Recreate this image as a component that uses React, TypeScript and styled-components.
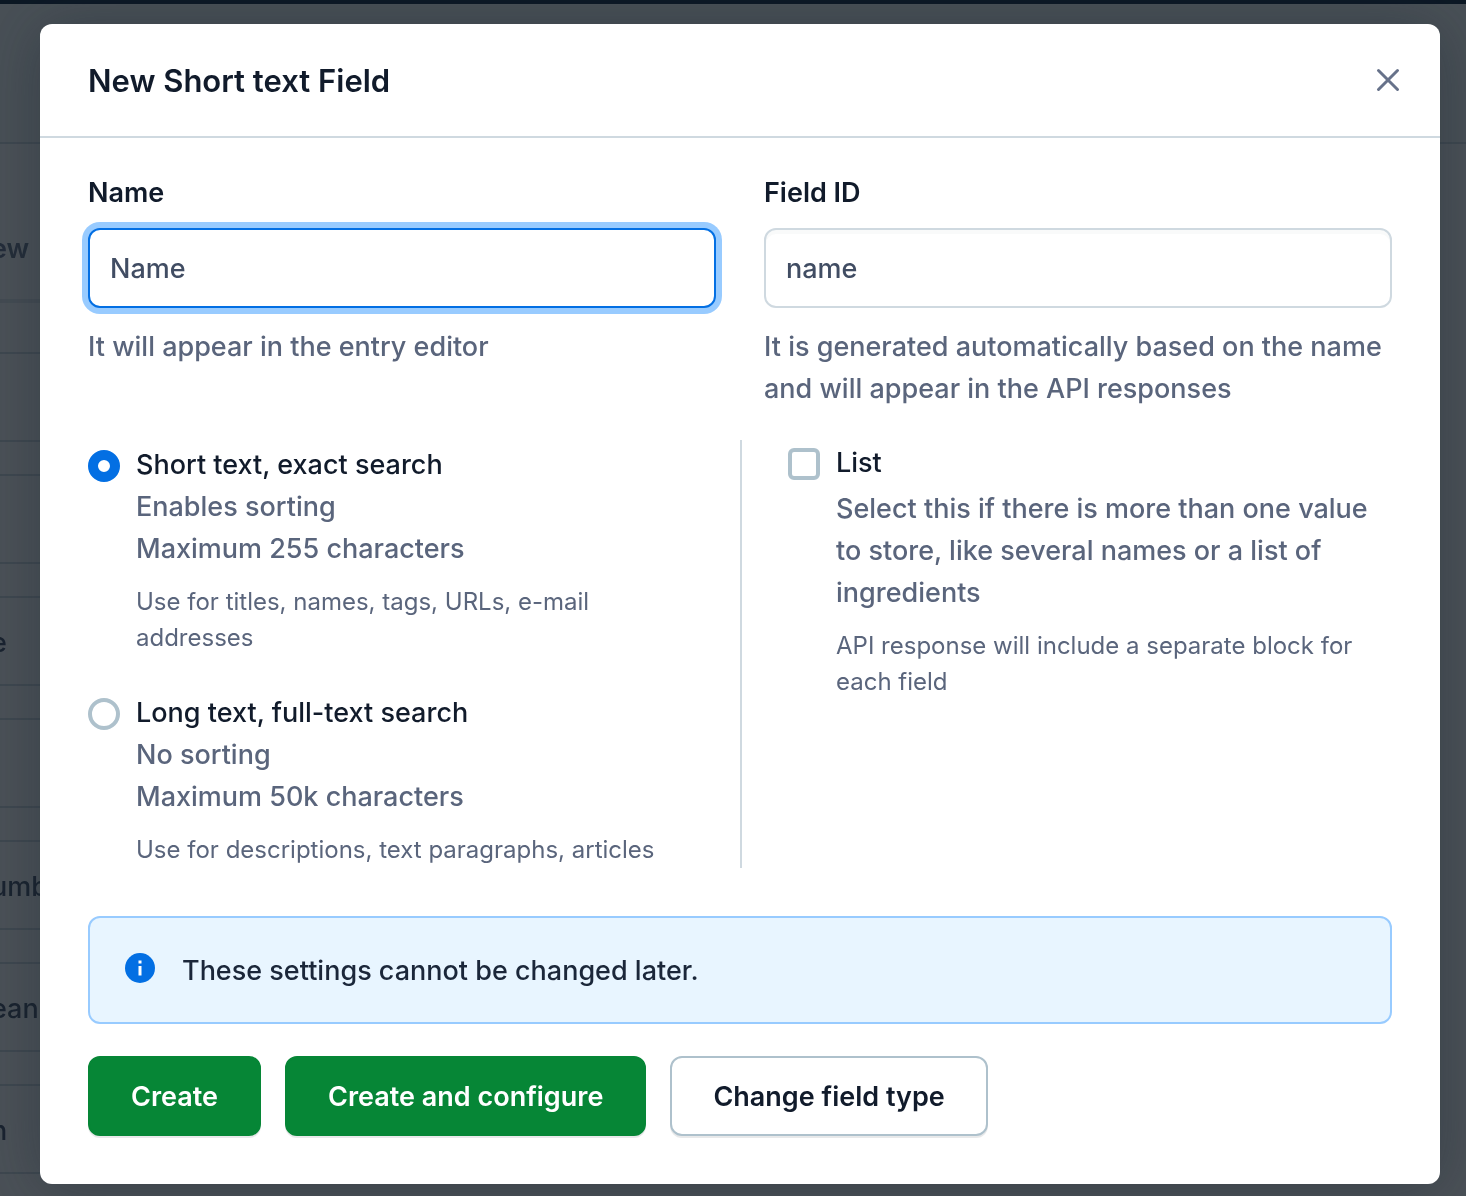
import React, { useState } from "react";
import styled, { createGlobalStyle, css } from "styled-components";

const GlobalStyle = createGlobalStyle`
  *, *::before, *::after { box-sizing: border-box; }
  body {
    margin: 0;
    background: #ffffff;
    color: #111b2b;
    font-family: Inter, "Liberation Sans", sans-serif;
    font-size: 27px;
    font-weight: 500;
    line-height: 42px;
  }
  button, input { font: inherit; color: inherit; margin: 0; }
  h1, p { margin: 0; }
`;

const Page = styled.div`
  position: fixed;
  inset: 0;
  overflow: hidden;
  display: flex;
  flex-direction: column;
`;

const TopBar = styled.div`
  flex: none;
  height: 4px;
  background: #0f233d;
`;

const PageHeader = styled.div`
  flex: none;
  height: 140px;
  background: #f7f9fa;
  border-bottom: 2px solid #cfd9e0;
`;

const PageColumn = styled.div`
  width: 50%;
`;

const PageTab = styled.div`
  height: 159px;
  padding-top: 84px;
  border-bottom: 4px solid #e3e8ec;
  color: #67728a;
  font-weight: 600;
  text-indent: -9px;
`;

const FieldList = styled.div`
  display: flex;
  flex-direction: column;
  gap: 32px;
  padding-top: 49px;
`;

const FieldCard = styled.div`
  flex: none;
  height: 90px;
  padding: 24px 0 20px;
  border: solid #cfd9e0;
  border-width: 2px 0;
  color: #414d63;
  text-indent: -9px;
`;

const Overlay = styled.div`
  position: relative;
  min-height: 100vh;
  padding: 24px 26px 12px 40px;
  background: rgba(12, 20, 28, 0.74);
`;

const Modal = styled.section`
  border-radius: 12px;
  background: #ffffff;
  box-shadow: 0 4px 60px rgba(25, 37, 50, 0.4);
`;

const ModalHeader = styled.header`
  display: flex;
  align-items: center;
  justify-content: space-between;
  padding: 32px 28px 32px 48px;
  border-bottom: 2px solid #cfd9e0;
`;

const Title = styled.h1`
  padding-top: 2px;
  font-size: 31px;
  line-height: 46px;
  font-weight: 600;
`;

const CloseButton = styled.button`
  display: flex;
  padding: 8px;
  border: 0;
  background: none;
  color: #67728a;
`;

const Form = styled.form`
  display: flex;
  flex-direction: column;
  padding: 35px 48px 48px;
`;

const FieldRow = styled.div`
  display: grid;
  grid-template-columns: 1fr 1fr;
  gap: 48px;
`;

const Label = styled.label`
  display: block;
  margin-bottom: 15px;
  line-height: 40px;
  font-weight: 600;
`;

const TextInput = styled.input<{ $active?: boolean }>`
  display: block;
  width: 100%;
  height: 80px;
  padding: 0 20px;
  border: 2px solid #cfd9e0;
  border-radius: 12px;
  outline: none;
  background: #ffffff;
  box-shadow: inset 0 4px 0 rgba(225, 228, 232, 0.2);
  color: #414d63;
  ${(p) =>
    p.$active &&
    css`
      border-color: #036fe3;
      box-shadow: 0 0 0 6px #98cbff;
    `}
`;

const HelpText = styled.p`
  margin-top: 18px;
  color: #5a657c;
`;

const OptionRow = styled.div`
  display: grid;
  grid-template-columns: 1fr 1fr;
  margin-top: 30px;
`;

const RadioColumn = styled.div`
  display: flex;
  flex-direction: column;
  gap: 36px;
  padding: 4px 48px 0 0;
`;

const ListColumn = styled.div`
  padding: 2px 0 0 46px;
  border-left: 2px solid #cfd9e0;
`;

const Option = styled.div`
  display: grid;
  grid-template-columns: 32px 1fr;
  column-gap: 16px;
`;

const tick = css`
  appearance: none;
  width: 32px;
  height: 32px;
  margin-top: 6px;
  border: 4px solid #aec1cc;
  background: #ffffff;
`;

const Radio = styled.input`
  ${tick}
  border-radius: 50%;
  &:checked { border: 10px solid #036fe3; }
`;

const Checkbox = styled.input`
  ${tick}
  border-radius: 6px;
  &:checked { background: #036fe3; border-color: #036fe3; }
`;

const OptionText = styled.div<{ $spaced?: boolean }>`
  grid-column: 2;
  margin-top: ${(p) => (p.$spaced ? 4 : 0)}px;
  color: #5a657c;
`;

const OptionNote = styled.p`
  grid-column: 2;
  margin-top: 14px;
  color: #5a657c;
  font-size: 24px;
  font-weight: 400;
  line-height: 36px;
`;

const Note = styled.div`
  display: flex;
  align-items: flex-start;
  gap: 24px;
  margin-top: 48px;
  padding: 32px 32px 30px;
  border: 2px solid #98cbff;
  border-radius: 12px;
  background: #e8f5ff;
  color: #1b273a;
`;

const Actions = styled.div`
  display: flex;
  gap: 24px;
  margin-top: 32px;
`;

const Button = styled.button<{ $positive?: boolean }>`
  height: 80px;
  padding: 2px 41px 0;
  border: 2px solid ${(p) => (p.$positive ? "#068636" : "#aec1cc")};
  border-radius: 12px;
  background: ${(p) => (p.$positive ? "#068636" : "#ffffff")};
  box-shadow: 0 2px 0 rgba(25, 37, 50, 0.1);
  color: ${(p) => (p.$positive ? "#ffffff" : "#111b2b")};
  font-weight: 600;
  white-space: nowrap;
`;

const CloseIcon = () => (
  <svg width="32" height="32" viewBox="0 0 32 32" fill="none" stroke="currentColor" strokeWidth="3" strokeLinecap="round" aria-hidden="true">
    <path d="M6.5 6.5 25.5 25.5M25.5 6.5 6.5 25.5" />
  </svg>
);

const InfoIcon = () => (
  <svg width="36" height="36" viewBox="0 0 36 36" aria-hidden="true">
    <circle cx="18" cy="18" r="15" fill="#036fe3" />
    <rect x="16.5" y="10.5" width="3" height="3" fill="#ffffff" />
    <rect x="16.5" y="16" width="3" height="9.5" fill="#ffffff" />
  </svg>
);

const cards = ["", "", "e", "", "umb", "ean", "n"];

export default function App() {
  const [name, setName] = useState("Name");
  const [fieldId, setFieldId] = useState("name");

  return (
    <>
      <GlobalStyle />
      <Page aria-hidden="true">
        <TopBar />
        <PageHeader />
        <PageColumn>
          <PageTab>ew</PageTab>
          <FieldList>
            {cards.map((text, i) => (
              <FieldCard key={i}>{text}</FieldCard>
            ))}
          </FieldList>
        </PageColumn>
      </Page>
      <Overlay>
        <Modal role="dialog" aria-modal="true" aria-labelledby="modal-title">
          <ModalHeader>
            <Title id="modal-title">New Short text Field</Title>
            <CloseButton type="button" aria-label="Close">
              <CloseIcon />
            </CloseButton>
          </ModalHeader>
          <Form onSubmit={(e) => e.preventDefault()}>
            <FieldRow>
              <div>
                <Label htmlFor="field-name">Name</Label>
                <TextInput id="field-name" $active value={name} onChange={(e) => setName(e.target.value)} />
                <HelpText>It will appear in the entry editor</HelpText>
              </div>
              <div>
                <Label htmlFor="field-id">Field ID</Label>
                <TextInput id="field-id" value={fieldId} onChange={(e) => setFieldId(e.target.value)} />
                <HelpText>It is generated automatically based on the name and will appear in the API responses</HelpText>
              </div>
            </FieldRow>
            <OptionRow>
              <RadioColumn>
                <Option>
                  <Radio type="radio" name="kind" id="kind-short" defaultChecked />
                  <label htmlFor="kind-short">Short text, exact search</label>
                  <OptionText>
                    Enables sorting
                    <br />
                    Maximum 255 characters
                  </OptionText>
                  <OptionNote>Use for titles, names, tags, URLs, e-mail addresses</OptionNote>
                </Option>
                <Option>
                  <Radio type="radio" name="kind" id="kind-long" />
                  <label htmlFor="kind-long">Long text, full-text search</label>
                  <OptionText>
                    No sorting
                    <br />
                    Maximum 50k characters
                  </OptionText>
                  <OptionNote>Use for descriptions, text paragraphs, articles</OptionNote>
                </Option>
              </RadioColumn>
              <ListColumn>
                <Option>
                  <Checkbox type="checkbox" id="is-list" />
                  <label htmlFor="is-list">List</label>
                  <OptionText $spaced>
                    Select this if there is more than one value to store, like several names or a list of ingredients
                  </OptionText>
                  <OptionNote>API response will include a separate block for each field</OptionNote>
                </Option>
              </ListColumn>
            </OptionRow>
            <Note>
              <InfoIcon />
              <span>These settings cannot be changed later.</span>
            </Note>
            <Actions>
              <Button type="submit" $positive>Create</Button>
              <Button type="button" $positive>Create and configure</Button>
              <Button type="button">Change field type</Button>
            </Actions>
          </Form>
        </Modal>
      </Overlay>
    </>
  );
}
